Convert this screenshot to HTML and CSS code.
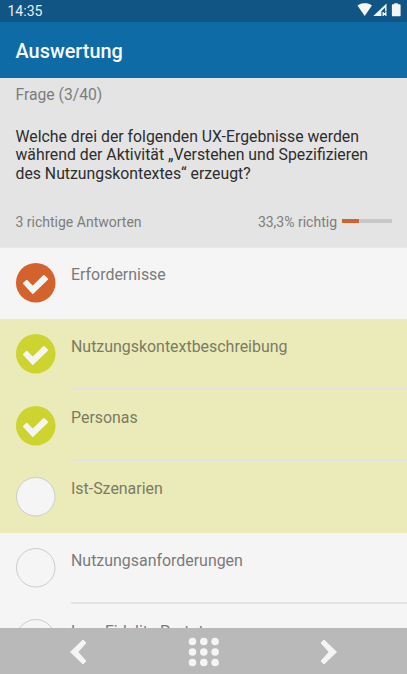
FILE: index.html
```html
<!DOCTYPE html>
<html lang="de">
<head>
<meta charset="utf-8">
<title>Auswertung</title>
<link rel="stylesheet" href="styles.css">
</head>
<body>
<div class="app">
  <div class="status">
    <span>14:35</span>
    <svg class="status-icons" width="44" height="17" viewBox="0 0 44 17">
      <path d="M.500 5.600C2.500 3.800 5 3.200 7.800 3.200s5.300.6 7.100 2.400L7.700 15.900z"/>
      <path d="M16.300 16L29.500 3.600V11.500H28.100V7.400L24.400 11.200V16z"/>
      <path d="M25.500 12h1.300v1.100h1.400v-1.100h1.300v4h-1.300v-1h-1.400v1h-1.300z"/>
      <path d="M37.200 3.300h3.600v1h1.800q1 0 1 .9v10.200q0 .9-.9.900h-6.900q-.9 0-.9-.9v-10.200q0-.9.900-.9h1.400z"/>
    </svg>
  </div>
  <header class="bar"><h1>Auswertung</h1></header>
  <section class="question">
    <div class="count">Frage (3/40)</div>
    <p class="text">Welche drei der folgenden UX-Ergebnisse werden<br>während der Aktivität „Verstehen und Spezifizieren<br>des Nutzungskontextes“ erzeugt?</p>
    <div class="meta">
      <span class="hint">3 richtige Antworten</span>
      <span class="score">33,3% richtig</span>
      <div class="track"><div class="fill"></div></div>
    </div>
  </section>
  <main class="list">
    <div class="row wrong last">
      <svg class="mark" viewBox="0 0 40 40"><circle cx="20" cy="20" r="20"/><path d="M8 20.700L11 18L16.900 24.200L28.200 13L31.600 16.400L16.900 30.400z"/></svg>
      <div class="label">Erfordernisse</div>
    </div>
    <div class="row hit">
      <svg class="mark" viewBox="0 0 40 40"><circle cx="20" cy="20" r="20"/><path d="M8 20.700L11 18L16.900 24.200L28.200 13L31.600 16.400L16.900 30.400z"/></svg>
      <div class="label">Nutzungskontextbeschreibung</div>
    </div>
    <div class="row hit">
      <svg class="mark" viewBox="0 0 40 40"><circle cx="20" cy="20" r="20"/><path d="M8 20.700L11 18L16.900 24.200L28.200 13L31.600 16.400L16.900 30.400z"/></svg>
      <div class="label">Personas</div>
    </div>
    <div class="row hit last">
      <svg class="mark open" viewBox="0 0 40 40"><circle cx="20" cy="20" r="19.500"/></svg>
      <div class="label">Ist-Szenarien</div>
    </div>
    <div class="row">
      <svg class="mark open" viewBox="0 0 40 40"><circle cx="20" cy="20" r="19.500"/></svg>
      <div class="label">Nutzungsanforderungen</div>
    </div>
    <div class="row last">
      <svg class="mark open" viewBox="0 0 40 40"><circle cx="20" cy="20" r="19.500"/></svg>
      <div class="label">Low-Fidelity-Prototypen</div>
    </div>
  </main>
  <nav class="nav">
    <svg width="18" height="28" viewBox="0 0 18 28"><path d="M1.500 14L14 1.900L17 5L8.800 14L17 23L14 26.100z"/></svg>
    <svg class="dots" width="32" height="30" viewBox="0 0 32 30">
      <circle cx="4.500" cy="4.500" r="3.800"/><circle cx="15.800" cy="4.500" r="3.800"/><circle cx="27.100" cy="4.500" r="3.800"/>
      <circle cx="4.500" cy="15" r="3.800"/><circle cx="15.800" cy="15" r="3.800"/><circle cx="27.100" cy="15" r="3.800"/>
      <circle cx="4.500" cy="25.500" r="3.800"/><circle cx="15.800" cy="25.500" r="3.800"/><circle cx="27.100" cy="25.500" r="3.800"/>
    </svg>
    <svg width="18" height="28" viewBox="0 0 18 28"><path d="M16.500 14L4 1.900L1 5L9.200 14L1 23L4 26.100z"/></svg>
  </nav>
</div>
</body>
</html>
```
FILE: styles.css
```css
* { box-sizing: border-box; }
body { margin: 0; font-family: Roboto, sans-serif; background: #f5f5f5; }
.app { height: 674px; display: flex; flex-direction: column; overflow: hidden; }
.status {
  flex: none; height: 22px; padding: 0 6.500px 0 7.500px;
  display: flex; justify-content: space-between; align-items: flex-start;
  background: #105583; color: #e8eef3; font-size: 14px; line-height: 22px;
}
.status-icons { fill: #f5f5f5; }
.bar { flex: none; height: 55.500px; padding-left: 15.500px; background: #0e6ba6; }
.bar h1 { margin: 0; font-size: 19.900px; font-weight: 500; line-height: 60px; color: #f7f9fb; }
.question { flex: none; height: 170.100px; padding: 7px 15px 0 15.500px; background: #e4e4e4; border-bottom: 1px solid #e9e9e9; }
.count { font-size: 15.700px; line-height: 20px; color: #7d7d7d; }
.text { margin: 23px 0 0; font-size: 15.800px; line-height: 18.600px; color: #2d2d2d; white-space: nowrap; }
.meta { display: flex; align-items: center; margin-top: 28.500px; font-size: 14px; line-height: 20px; color: #7d7d7d; }
.score { margin-left: auto; }
.track { width: 50px; height: 4px; margin: -2px 0 0 5px; background: #c8c8c8; }
.fill { width: 33.300%; height: 100%; background: #d3622c; }
.list { flex: 1; min-height: 0; overflow: hidden; }
.row { height: 71.300px; padding-left: 15.500px; display: flex; gap: 16px; background: #f5f5f5; }
.hit { background: #ebebba; }
.mark { flex: none; width: 39.500px; height: 39.500px; margin-top: 15.400px; fill: #cdd32f; overflow: visible; }
.mark path { fill: #f5f5f5; stroke: #f5f5f5; stroke-width: 1.800; stroke-linejoin: round; }
.wrong .mark { fill: #d3622c; }
.mark.open { fill: #f5f5f5; stroke: #cbcbcb; stroke-width: 1; }
.label { flex: 1; padding-top: 17.900px; font-size: 15.930px; line-height: 20px; color: #7b7b7b; border-bottom: 2px solid #e3e3e3; }
.hit .label { color: #7b7b63; }
.last .label { border-bottom-color: transparent; }
.nav { flex: none; height: 46px; padding: 2px 69px 0; display: flex; align-items: center; justify-content: space-between; background: #b9b9b9; }
.nav path { fill: #f5f5f5; stroke: #f5f5f5; stroke-width: 1; stroke-linejoin: round; }
.dots { fill: #f5f5f5; }
```
